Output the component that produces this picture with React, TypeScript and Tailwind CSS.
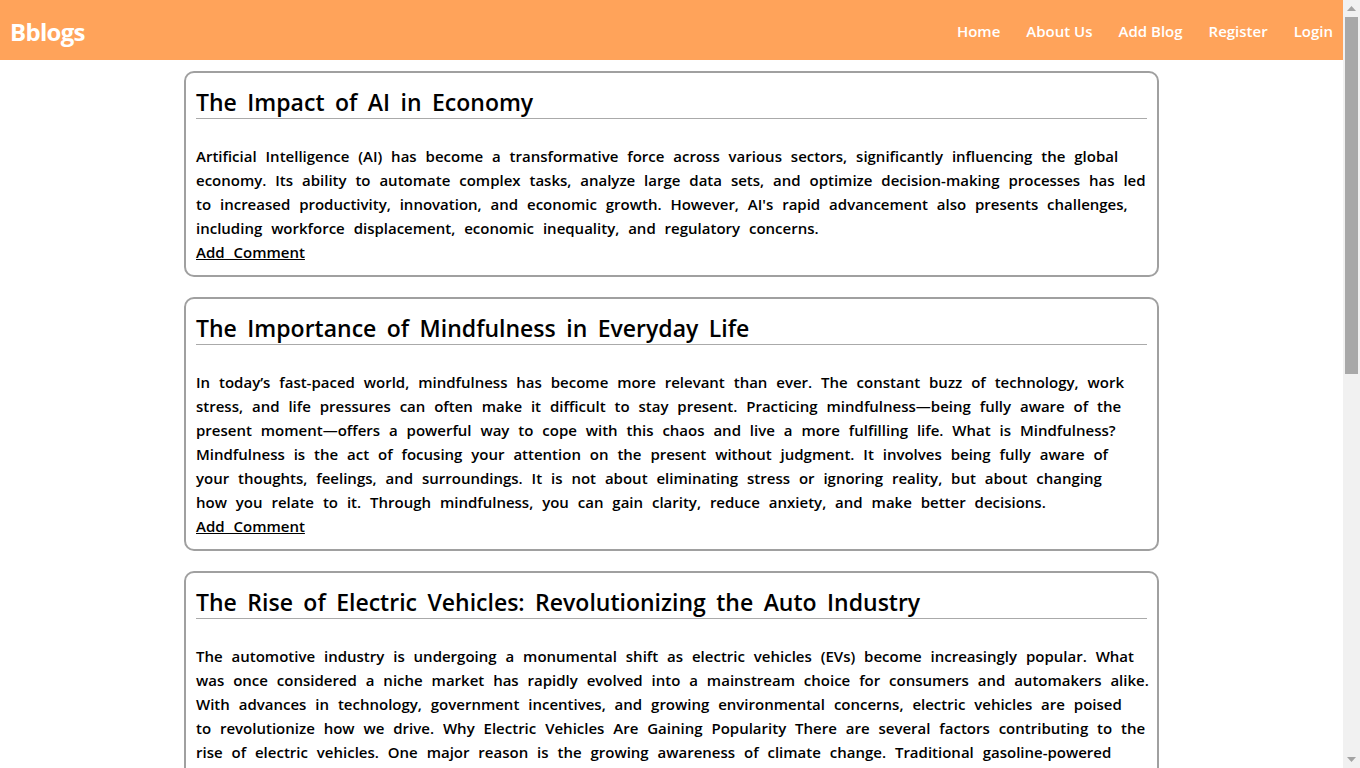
import React from 'react';

type Post = { id: number; title: string; lines: string[]; rest?: string };

const posts: Post[] = [
  {
    id: 1,
    title: 'The Impact of AI in Economy',
    lines: [
      'Artificial Intelligence (AI) has become a transformative force across various sectors, significantly influencing the global',
      'economy. Its ability to automate complex tasks, analyze large data sets, and optimize decision-making processes has led',
      "to increased productivity, innovation, and economic growth. However, AI's rapid advancement also presents challenges,",
      'including workforce displacement, economic inequality, and regulatory concerns.',
    ],
  },
  {
    id: 2,
    title: 'The Importance of Mindfulness in Everyday Life',
    lines: [
      'In today\u2019s fast-paced world, mindfulness has become more relevant than ever. The constant buzz of technology, work',
      'stress, and life pressures can often make it difficult to stay present. Practicing mindfulness\u2014being fully aware of the',
      'present moment\u2014offers a powerful way to cope with this chaos and live a more fulfilling life. What is Mindfulness?',
      'Mindfulness is the act of focusing your attention on the present without judgment. It involves being fully aware of',
      'your thoughts, feelings, and surroundings. It is not about eliminating stress or ignoring reality, but about changing',
      'how you relate to it. Through mindfulness, you can gain clarity, reduce anxiety, and make better decisions.',
    ],
  },
  {
    id: 3,
    title: 'The Rise of Electric Vehicles: Revolutionizing the Auto Industry',
    lines: [
      'The automotive industry is undergoing a monumental shift as electric vehicles (EVs) become increasingly popular. What',
      'was once considered a niche market has rapidly evolved into a mainstream choice for consumers and automakers alike.',
      'With advances in technology, government incentives, and growing environmental concerns, electric vehicles are poised',
      'to revolutionize how we drive. Why Electric Vehicles Are Gaining Popularity There are several factors contributing to the',
      'rise of electric vehicles. One major reason is the growing awareness of climate change. Traditional gasoline-powered',
    ],
    rest:
      'vehicles emit greenhouse gases that contribute to global warming and air pollution, while EVs produce zero tailpipe emissions. Lower running costs are another big draw: electricity is generally cheaper than gasoline, and electric motors have fewer moving parts, which means less maintenance over the life of the vehicle.',
  },
];

const links = ['Home', 'About Us', 'Add Blog', 'Register', 'Login'];

function Navbar() {
  return (
    <nav className="h-[60px] shrink-0 bg-[#ffa35a] flex items-center justify-between px-[10px] text-white">
      <a href="#" className="text-[24px] font-bold tracking-[-0.7px] mt-[3px]">Bblogs</a>
      <div className="flex items-center gap-[26px] text-[15px] font-semibold mt-[2px]">
        {links.map((l) => (
          <a key={l} href="#">{l}</a>
        ))}
      </div>
    </nav>
  );
}

function BlogCard({ post }: { post: Post }) {
  return (
    <div className="border-2 border-[#a0a0a0] rounded-[10px] px-[10px] pt-[13px] pb-[11px]">
      <h2 className="text-[23px] font-semibold leading-[32px] [word-spacing:4.5px] border-b border-[#aaaaaa]">
        {post.title}
      </h2>
      <p className="mt-[25px] text-[15px] font-semibold leading-[24px] [word-spacing:5px]">
        {post.lines.map((line, i) => (
          <span key={i} className="block whitespace-nowrap">{line}</span>
        ))}
        {post.rest}
      </p>
      <a href="#" className="block w-fit text-[15px] font-semibold leading-[24px] underline [word-spacing:5px]">
        Add Comment
      </a>
    </div>
  );
}

// classic browser scrollbar as seen in the screenshot
function Scrollbar() {
  return (
    <div className="w-[17px] shrink-0 h-screen bg-[#f1f1f1] flex flex-col">
      <div className="h-[17px] flex items-center justify-center">
        <svg width="9" height="5" viewBox="0 0 9 5"><path d="M4.5 0 L9 5 L0 5 Z" fill="#a3a3a3" /></svg>
      </div>
      <div className="h-[357px] ml-[2px] mr-[2px] bg-[#a8a8a8]" />
      <div className="flex-1" />
      <div className="h-[17px] flex items-center justify-center">
        <svg width="9" height="5" viewBox="0 0 9 5"><path d="M0 0 L9 0 L4.5 5 Z" fill="#a3a3a3" /></svg>
      </div>
    </div>
  );
}

export default function App() {
  return (
    <div className="flex h-screen overflow-hidden bg-white text-black font-['Open_Sans',sans-serif]">
      <div className="flex-1 min-w-0 overflow-y-auto">
        <Navbar />
        <main className="w-[975px] mx-auto pt-[11px] pb-[22px] flex flex-col gap-[20px]">
          {posts.map((p) => (
            <BlogCard key={p.id} post={p} />
          ))}
        </main>
      </div>
      <Scrollbar />
    </div>
  );
}
